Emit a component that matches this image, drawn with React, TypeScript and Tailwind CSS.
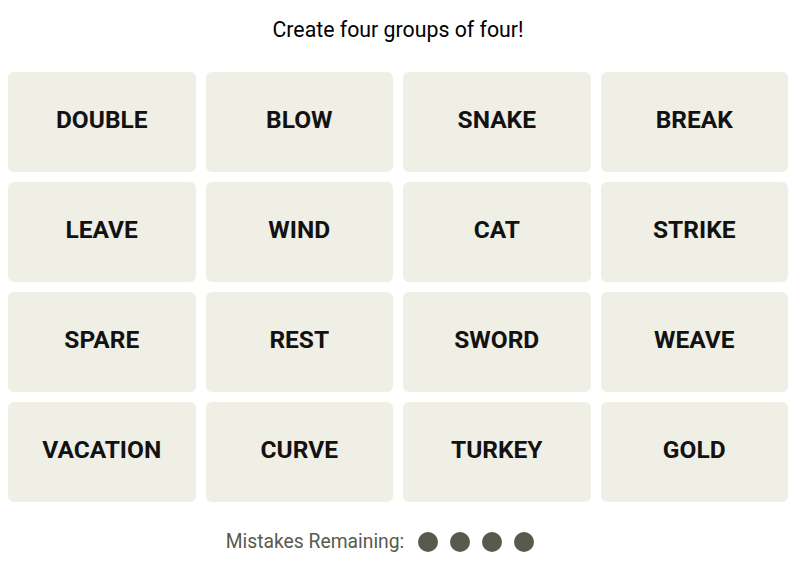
const words = [
  "DOUBLE", "BLOW", "SNAKE", "BREAK",
  "LEAVE", "WIND", "CAT", "STRIKE",
  "SPARE", "REST", "SWORD", "WEAVE",
  "VACATION", "CURVE", "TURKEY", "GOLD",
];

function Tile({ word }: { word: string }) {
  return (
    <div className="h-[100px] rounded-md bg-[#efefe6] flex items-center justify-center pb-[3px]">
      <span className="text-[24.5px] font-bold text-[#121212] uppercase">{word}</span>
    </div>
  );
}

export default function App() {
  return (
    <div className="w-[798px] h-[572px] bg-white pt-[18px]" style={{ fontFamily: "Roboto, 'Liberation Sans', sans-serif" }}>
      <h1 className="h-6 text-center text-[21.3px] leading-6 text-black pr-[2px]">Create four groups of four!</h1>

      <div className="ml-2 mt-[30px] w-[780px] grid grid-cols-4 gap-[10px]">
        {words.map((w) => (
          <Tile key={w} word={w} />
        ))}
      </div>

      <div className="mt-[30px] flex items-center justify-center h-5 pr-[38px]">
        <span className="text-[19.3px] text-[#5a594e] mr-[14px]">Mistakes Remaining:</span>
        <div className="flex gap-3">
          {[0, 1, 2, 3].map((i) => (
            <span key={i} className="block w-5 h-5 rounded-full bg-[#5a594e]" />
          ))}
        </div>
      </div>
    </div>
  );
}
